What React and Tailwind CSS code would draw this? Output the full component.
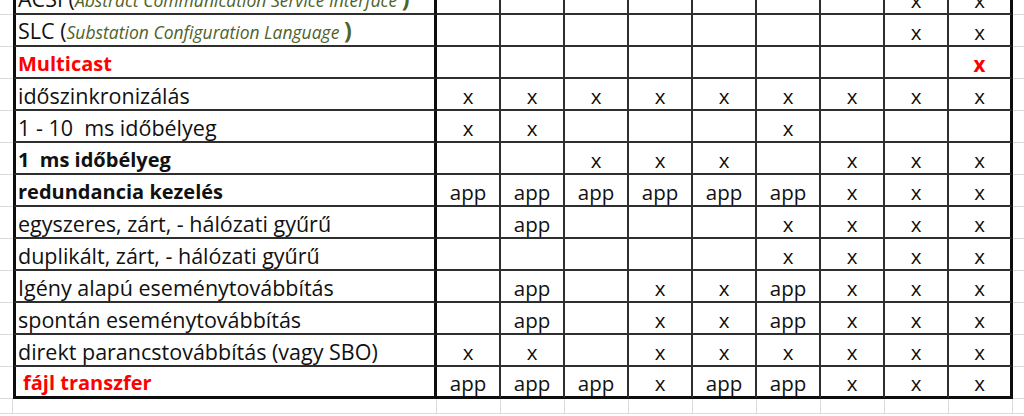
const X = 'x';
const A = 'app';

const ROWS = [
  { label: 'acsi', cells: ['', '', '', '', '', '', '', X, X] },
  { label: 'slc', cells: ['', '', '', '', '', '', '', X, X] },
  { label: 'Multicast', kind: 'red', cells: ['', '', '', '', '', '', '', '', 'rx'] },
  { label: 'időszinkronizálás', cells: [X, X, X, X, X, X, X, X, X] },
  { label: '1 - 10\u00a0 ms időbélyeg', cells: [X, X, '', '', '', X, '', '', ''] },
  { label: '1\u00a0 ms időbélyeg', kind: 'bold', cells: ['', '', X, X, X, '', X, X, X] },
  { label: 'redundancia kezelés', kind: 'bold', cells: [A, A, A, A, A, A, X, X, X] },
  { label: 'egyszeres, zárt, - hálózati gyűrű', cells: ['', A, '', '', '', X, X, X, X] },
  { label: 'duplikált, zárt, - hálózati gyűrű', cells: ['', '', '', '', '', X, X, X, X] },
  { label: 'Igény alapú eseménytovábbítás', cells: ['', A, '', X, X, A, X, X, X] },
  { label: 'spontán eseménytovábbítás', cells: ['', A, '', X, X, A, X, X, X] },
  { label: 'direkt parancstovábbítás (vagy SBO)', cells: [X, X, '', X, X, X, X, X, X] },
  { label: 'fájl transzfer', kind: 'redpad', cells: [A, A, A, X, A, A, X, X, X] },
];

function Label({ row }) {
  if (row.label === 'acsi' || row.label === 'slc') {
    const name = row.label === 'acsi' ? 'ACSI' : 'SLC';
    const desc =
      row.label === 'acsi'
        ? 'Abstract Communication Service Interface'
        : 'Substation Configuration Language';
    return (
      <span className="whitespace-nowrap">
        <span className="text-[#111]">{name} (</span>
        <span className="italic text-[17.5px] text-[#4f6228]">{desc} </span>
        <span className="font-bold text-[23px] text-[#4f6228]">)</span>
      </span>
    );
  }
  if (row.kind === 'red') return <span className="font-bold text-[20px] text-[#ff0000]">{row.label}</span>;
  if (row.kind === 'redpad') return <span className="font-bold text-[20px] text-[#ff0000] pl-[5px]">{row.label}</span>;
  if (row.kind === 'bold') return <span className="font-bold text-[20px]">{row.label}</span>;
  return <span>{row.label}</span>;
}

function Row({ row, last }) {
  const bottom = last ? 'border-b-[3px] border-b-[#0d0d0d]' : 'border-b-2 border-b-[#2e2e2e]';
  return (
    <div className="flex h-[32px]">
      <div className="w-[13px] shrink-0 border-b border-b-[#dadada]" />
      <div
        className={`w-[424px] shrink-0 flex items-end pl-[2px] pb-[3px] text-[21.5px] border-l-[3px] border-r-[3px] border-l-[#0d0d0d] border-r-[#0d0d0d] ${bottom}`}
      >
        <Label row={row} />
      </div>
      {row.cells.map((c, i) => (
        <div
          key={i}
          className={`w-[64px] shrink-0 flex items-end justify-center pb-[3px] text-[20.5px] ${
            i === 8 ? 'border-r-[3px] border-r-[#0d0d0d]' : 'border-r-2 border-r-[#2e2e2e]'
          } ${bottom}`}
        >
          {c === 'rx' ? <span className="font-bold text-[#ff0000]">x</span> : c}
        </div>
      ))}
      <div className="flex-1 border-b border-b-[#dadada]" />
    </div>
  );
}

export default function App() {
  return (
    <div className="w-[1024px] h-[416px] overflow-hidden bg-white leading-none text-[#111] font-['Open_Sans',sans-serif]">
      <div className="-mt-[17px]">
        {ROWS.map((r, i) => (
          <Row key={i} row={r} last={i === ROWS.length - 1} />
        ))}
        <div className="flex h-[15px]">
          <div className="w-[13px] shrink-0 border-r border-b border-[#dadada]" />
          <div className="w-[424px] shrink-0 border-r border-b border-[#dadada]" />
          {Array.from({ length: 9 }).map((_, i) => (
            <div key={i} className="w-[64px] shrink-0 border-r border-b border-[#dadada]" />
          ))}
          <div className="flex-1 border-b border-[#dadada]" />
        </div>
      </div>
    </div>
  );
}
